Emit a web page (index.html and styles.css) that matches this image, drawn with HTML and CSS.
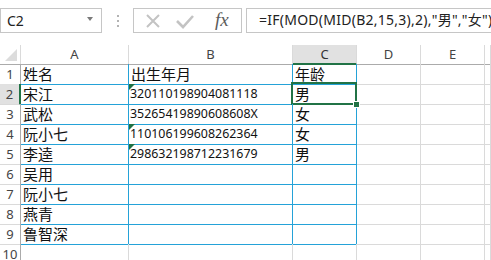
FILE: index.html
```html
<!DOCTYPE html>
<html lang="zh-CN">
<head>
    <meta charset="UTF-8">
    <title>出生年月 - 性别</title>
    <link rel="stylesheet" href="styles.css">
</head>
<body>

    <div class="bar">
        <div class="namebox">
            <span class="ref">C2</span>
            <span class="drop"></span>
        </div>
        <div class="dots"><i></i><i></i><i></i></div>
        <div class="fxbox">
            <svg class="icon" width="16" height="16" viewBox="0 0 16 16">
                <path d="M2 2 L14 14 M14 2 L2 14" stroke="#c3c3c3" stroke-width="2" fill="none"/>
            </svg>
            <svg class="icon" width="20" height="16" viewBox="0 0 20 16">
                <path d="M2 8 L8 14 L18 3" stroke="#c3c3c3" stroke-width="2.6" fill="none"/>
            </svg>
            <span class="fx">fx</span>
        </div>
        <div class="formula">=IF(MOD(MID(B2,15,3),2),"男","女")</div>
    </div>

    <div class="sheet">
        <div class="row head">
            <div class="corner"></div>
            <div>A</div>
            <div>B</div>
            <div class="on">C</div>
            <div>D</div>
            <div>E</div>
            <div></div>
        </div>
        <div class="row">
            <div class="rh">1</div>
            <div class="tb cn">姓名</div>
            <div class="tb cn">出生年月</div>
            <div class="tb cn">年龄</div>
            <div></div><div></div><div></div>
        </div>
        <div class="row">
            <div class="rh on">2</div>
            <div class="tb cn">宋江</div>
            <div class="tb num warn">320110198904081118</div>
            <div class="tb cn sel">男</div>
            <div></div><div></div><div></div>
        </div>
        <div class="row">
            <div class="rh">3</div>
            <div class="tb cn">武松</div>
            <div class="tb num">35265419890608608X</div>
            <div class="tb cn">女</div>
            <div></div><div></div><div></div>
        </div>
        <div class="row">
            <div class="rh">4</div>
            <div class="tb cn">阮小七</div>
            <div class="tb num warn">110106199608262364</div>
            <div class="tb cn">女</div>
            <div></div><div></div><div></div>
        </div>
        <div class="row">
            <div class="rh">5</div>
            <div class="tb cn">李逵</div>
            <div class="tb num warn">298632198712231679</div>
            <div class="tb cn">男</div>
            <div></div><div></div><div></div>
        </div>
        <div class="row">
            <div class="rh">6</div>
            <div class="tb cn">吴用</div>
            <div class="tb"></div>
            <div class="tb"></div>
            <div></div><div></div><div></div>
        </div>
        <div class="row">
            <div class="rh">7</div>
            <div class="tb cn">阮小七</div>
            <div class="tb"></div>
            <div class="tb"></div>
            <div></div><div></div><div></div>
        </div>
        <div class="row">
            <div class="rh">8</div>
            <div class="tb cn">燕青</div>
            <div class="tb"></div>
            <div class="tb"></div>
            <div></div><div></div><div></div>
        </div>
        <div class="row">
            <div class="rh">9</div>
            <div class="tb cn">鲁智深</div>
            <div class="tb"></div>
            <div class="tb"></div>
            <div></div><div></div><div></div>
        </div>
        <div class="row">
            <div class="rh">10</div>
            <div></div><div></div><div></div><div></div><div></div><div></div>
        </div>
    </div>

</body>
</html>
```

FILE: styles.css
```css
body {
    margin: 0;
    background-color: #fff;
    font-family: "Noto Sans", "Noto Sans CJK SC", sans-serif;
    overflow: hidden;
}
.bar {
    display: flex;
    align-items: stretch;
    height: 25px;
    margin-top: 8px;
}
.namebox {
    box-sizing: border-box;
    width: 102px;
    border: 1px solid #c6c6c6;
    display: flex;
    align-items: center;
    justify-content: space-between;
    padding: 0 8px 0 6px;
    font-size: 14px;
    color: #222;
}
.drop {
    width: 0;
    height: 0;
    border-left: 3px solid transparent;
    border-right: 3px solid transparent;
    border-top: 4px solid #7a7a7a;
    margin-top: -3px;
}
.dots {
    width: 31px;
    display: flex;
    flex-direction: column;
    align-items: center;
    justify-content: center;
    gap: 3px;
}
.dots i {
    width: 2px;
    height: 2px;
    background-color: #b3b3b3;
}
.fxbox {
    box-sizing: border-box;
    width: 109px;
    border: 1px solid #c6c6c6;
    display: flex;
    align-items: center;
    padding-left: 11px;
    gap: 14px;
}
.fx {
    font-family: "Liberation Serif", serif;
    font-style: italic;
    font-size: 19px;
    color: #5c5c5c;
    margin-left: 6px;
    margin-top: -2px;
}
.formula {
    box-sizing: border-box;
    flex: 1;
    min-width: 0;
    margin-left: 4px;
    margin-right: -4px;
    border: 1px solid #c6c6c6;
    padding-left: 12px;
    font-size: 14px;
    letter-spacing: 0.25px;
    line-height: 22px;
    white-space: nowrap;
    color: #222;
}
.sheet {
    margin-top: 12px;
}
.row {
    display: grid;
    grid-template-columns: 21px 108px 164px 64px 64px 64px 1fr;
    height: 20px;
}
.row > div {
    box-sizing: border-box;
    border-right: 1px solid #dadada;
    border-bottom: 1px solid #dadada;
    position: relative;
    white-space: nowrap;
}
.head {
    height: 19px;
}
.head > div {
    border-bottom-color: #ababab;
    text-align: center;
    font-size: 13px;
    line-height: 18px;
    color: #444;
}
.head > div.on {
    background-color: #e1e1e1;
    border-bottom: 2px solid #217346;
    color: #333;
}
.corner::after {
    content: "";
    position: absolute;
    right: 3px;
    bottom: 3px;
    width: 0;
    height: 0;
    border-left: 12px solid transparent;
    border-bottom: 12px solid #dcdcdc;
}
.row > .rh {
    border-right-color: #ababab;
    text-align: center;
    font-size: 13px;
    line-height: 20px;
    color: #444;
}
.row > .rh.on {
    background-color: #e1e1e1;
    border-right: 2px solid #217346;
}
.row > .tb {
    border-right-color: #24a2d8;
    border-bottom-color: #24a2d8;
}
.cn {
    font-size: 15px;
    line-height: 20px;
    padding-left: 2px;
    color: #111;
}
.num {
    font-size: 12.4px;
    line-height: 20px;
    padding-left: 1px;
    color: #111;
}
.warn::before {
    content: "";
    position: absolute;
    left: 0;
    top: 0;
    width: 0;
    height: 0;
    border-top: 6px solid #1e7145;
    border-right: 6px solid transparent;
}
.sel::after {
    content: "";
    position: absolute;
    left: -2px;
    top: -2px;
    right: -1px;
    bottom: -1px;
    border: 2px solid #217346;
}
.sel::before {
    content: "";
    position: absolute;
    right: -4px;
    bottom: -4px;
    width: 5px;
    height: 5px;
    background-color: #217346;
    border: 1px solid #fff;
    z-index: 2;
}
```
